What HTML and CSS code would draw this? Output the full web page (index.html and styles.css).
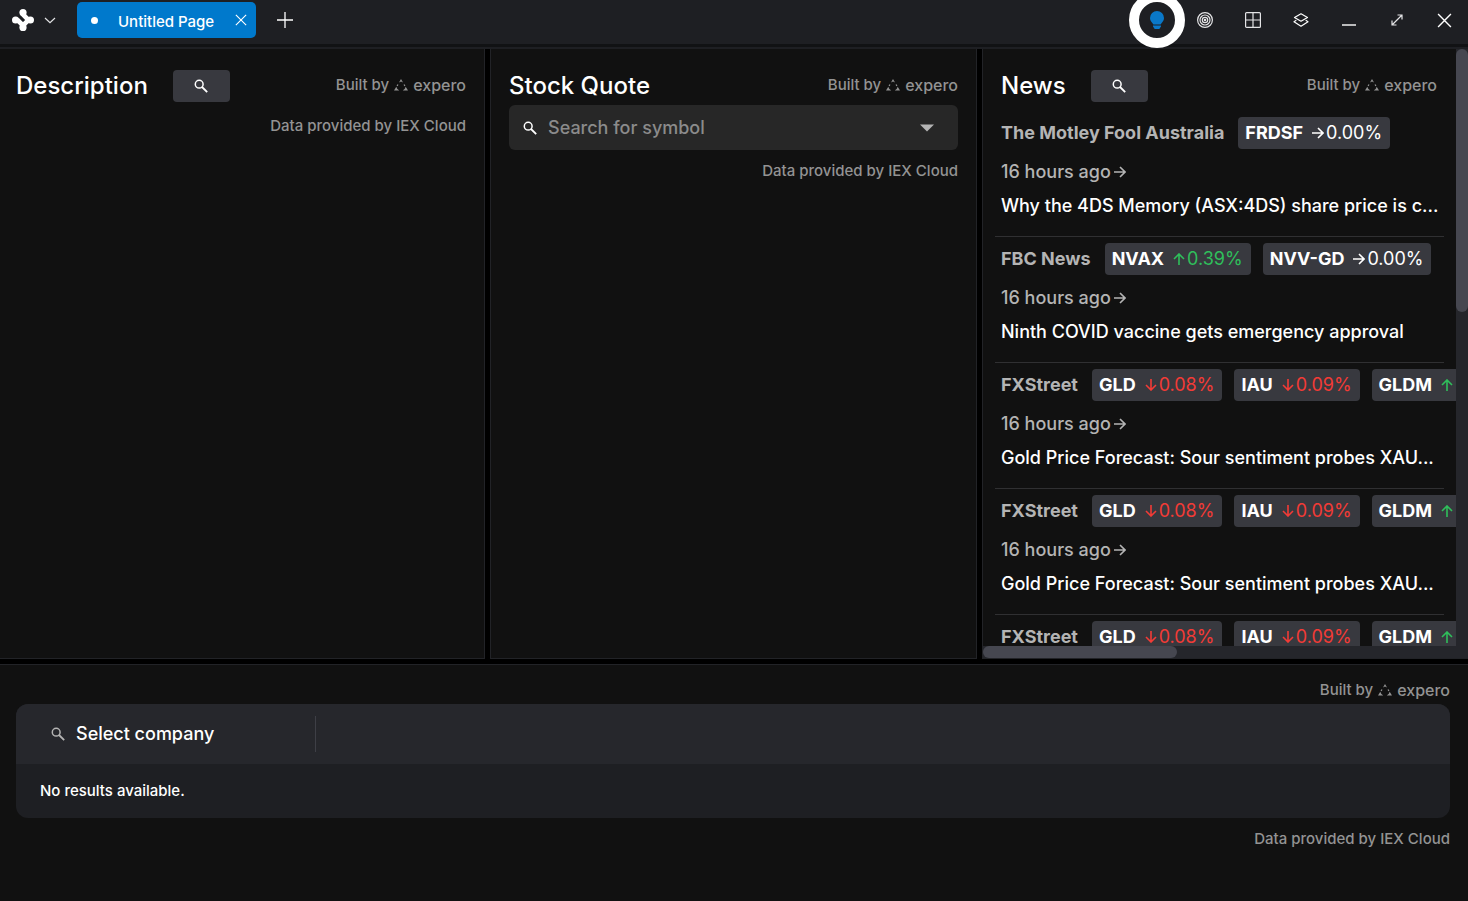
FILE: index.html
```
<!DOCTYPE html>
<html lang="en">
<head>
<meta charset="utf-8">
<title>Untitled Page</title>
<link rel="stylesheet" href="styles.css">
</head>
<body>
<svg class="defs" aria-hidden="true">
  <symbol id="search" viewBox="0 0 14 14"><circle cx="5.200" cy="5.200" r="3.900" fill="none" stroke="currentColor" stroke-width="1.500"/><path d="M8 8l5.200 5.200" stroke="currentColor" stroke-width="1.800"/></symbol>
  <symbol id="arrow" viewBox="0 0 12 12"><path d="M0 6h11M6 1l5 5-5 5" fill="none" stroke="currentColor" stroke-width="1.600"/></symbol>
  <symbol id="close" viewBox="0 0 14 14"><path d="M1 1l12 12M13 1L1 13" stroke="currentColor" stroke-width="1.300" fill="none"/></symbol>
  <symbol id="expero" viewBox="0 0 14 12"><path d="M7 0l2 3.600-2-1-2 1zM2.300 7.800l.9 2 2 1.800H0zM11.700 7.800l-.9 2-2 1.800H14zM3.400 5.200l1.100.6-.9 1.500-1-.6zM10.600 5.200l-1.100.6.9 1.500 1-.6z" fill="currentColor"/></symbol>
</svg>
<div class="window">
  <header class="topbar">
    <button class="menu" aria-label="Main menu">
      <svg width="22" height="22" viewBox="0 0 22 22"><path fill="none" stroke="#fff" stroke-width="4.600" d="M10.500 4.500L11.500 6 16.500 11 11 16.500 5.500 11"/><path fill="none" stroke="#fff" stroke-width="3" d="M4 11h3M11 3v3"/><g fill="#fff"><circle cx="11" cy="3.600" r="3.600"/><circle cx="18.400" cy="11" r="3.600"/><circle cx="11" cy="18.400" r="3.600"/><circle cx="3.600" cy="11" r="3.600"/></g></svg>
      <svg width="12" height="7" viewBox="0 0 12 7"><path d="M1 1l5 4.600L11 1" fill="none" stroke="#e4e4e6" stroke-width="1.200"/></svg>
    </button>
    <div class="tab">
      <span class="dot"></span><span class="tab-name">Untitled Page</span>
      <button class="tab-close" aria-label="Close tab"><svg width="12" height="12"><use href="#close"/></svg></button>
    </div>
    <button class="add" aria-label="New page"><svg width="16" height="16" viewBox="0 0 16 16"><path d="M8 0v16M0 8h16" stroke="#fff" stroke-width="1.300"/></svg></button>
    <div class="tools">
      <button class="tool tip" aria-label="Theme"><svg width="14" height="18" viewBox="0 0 14 18"><path fill="#0a78c8" d="M7 0a7 7 0 0 1 7 7c0 2.600-1.400 3.700-2.700 5.400L10.600 13.600H3.400L2.700 12.400C1.400 10.700 0 9.600 0 7a7 7 0 0 1 7-7zM3 14.500h8v1L9.300 18H4.700L3 15.500z"/></svg></button>
      <button class="tool" aria-label="Focus"><svg width="16" height="16" viewBox="0 0 16 16" fill="none" stroke="#e4e4e6" stroke-width="1.200"><circle cx="8" cy="8" r="7.400"/><circle cx="8" cy="8" r="5"/><circle cx="8" cy="8" r="2.700"/><circle cx="8" cy="8" r=".7"/></svg></button>
      <button class="tool" aria-label="Layout"><svg width="16" height="16" viewBox="0 0 16 16" fill="none" stroke="#e4e4e6" stroke-width="1.200"><rect x=".6" y=".6" width="14.800" height="14.800" rx="1"/><path d="M8 1v14M1 8h14"/></svg></button>
      <button class="tool" aria-label="Layers"><svg width="16" height="14" viewBox="0 0 16 14" fill="none" stroke="#fff" stroke-width="1.200" stroke-linejoin="round"><path d="M8 .8l6.500 3.700L8 8.200 1.500 4.500zM3.300 7.200L1 8.800l7 4.400 7-4.400-2.300-1.600"/></svg></button>
      <button class="tool" aria-label="Minimize"><svg width="14" height="12" viewBox="0 0 14 12"><path d="M0 11h14" stroke="#fff" stroke-width="1.400"/></svg></button>
      <button class="tool" aria-label="Expand"><svg width="12" height="12" viewBox="0 0 12 12"><path d="M1.500 10.500l9-9M6.500 1H11v4.500M1 6.500V11h4.500" fill="none" stroke="#e4e4e6" stroke-width="1.200"/></svg></button>
      <button class="tool" aria-label="Close"><svg width="15" height="15"><use href="#close"/></svg></button>
    </div>
  </header>

  <main class="panes">
    <section class="pane">
      <div class="head"><h2>Description</h2><button class="find" aria-label="Search description"><svg width="14" height="14"><use href="#search"/></svg></button><div class="built">Built by <svg width="14" height="12"><use href="#expero"/></svg><span class="brand">expero</span></div></div>
      <p class="credit">Data provided by IEX Cloud</p>
    </section>
    <section class="pane">
      <div class="head"><h2>Stock Quote</h2><div class="built">Built by <svg width="14" height="12"><use href="#expero"/></svg><span class="brand">expero</span></div></div>
      <label class="combo"><svg width="14" height="14"><use href="#search"/></svg><input type="text" placeholder="Search for symbol" aria-label="Search for symbol"><svg width="16" height="8" viewBox="0 0 16 8"><path d="M1 .5h14L8 7.500z" fill="#b4b4b4"/></svg></label>
      <p class="credit">Data provided by IEX Cloud</p>
    </section>
    <section class="scroller">
      <div class="news">
        <div class="head"><h2>News</h2><button class="find" aria-label="Search news"><svg width="14" height="14"><use href="#search"/></svg></button><div class="built">Built by <svg width="14" height="12"><use href="#expero"/></svg><span class="brand">expero</span></div></div>
        <article class="item"><div class="row"><b class="source">The Motley Fool Australia</b><button class="chip"><b>FRDSF</b><span class="flat"><svg class="arr"><use href="#arrow"/></svg>0.00%</span></button></div><div class="ago">16 hours ago<svg class="arr"><use href="#arrow"/></svg></div><p class="title">Why the 4DS Memory (ASX:4DS) share price is c...</p></article>
        <article class="item"><div class="row"><b class="source">FBC News</b><button class="chip"><b>NVAX</b><span class="up"><svg class="arr"><use href="#arrow"/></svg>0.39%</span></button><button class="chip"><b>NVV-GD</b><span class="flat"><svg class="arr"><use href="#arrow"/></svg>0.00%</span></button></div><div class="ago">16 hours ago<svg class="arr"><use href="#arrow"/></svg></div><p class="title">Ninth COVID vaccine gets emergency approval</p></article>
        <article class="item"><div class="row"><b class="source">FXStreet</b><button class="chip"><b>GLD</b><span class="down"><svg class="arr"><use href="#arrow"/></svg>0.08%</span></button><button class="chip"><b>IAU</b><span class="down"><svg class="arr"><use href="#arrow"/></svg>0.09%</span></button><button class="chip"><b>GLDM</b><span class="up"><svg class="arr"><use href="#arrow"/></svg></span></button></div><div class="ago">16 hours ago<svg class="arr"><use href="#arrow"/></svg></div><p class="title">Gold Price Forecast: Sour sentiment probes XAU...</p></article>
        <article class="item"><div class="row"><b class="source">FXStreet</b><button class="chip"><b>GLD</b><span class="down"><svg class="arr"><use href="#arrow"/></svg>0.08%</span></button><button class="chip"><b>IAU</b><span class="down"><svg class="arr"><use href="#arrow"/></svg>0.09%</span></button><button class="chip"><b>GLDM</b><span class="up"><svg class="arr"><use href="#arrow"/></svg></span></button></div><div class="ago">16 hours ago<svg class="arr"><use href="#arrow"/></svg></div><p class="title">Gold Price Forecast: Sour sentiment probes XAU...</p></article>
        <article class="item"><div class="row"><b class="source">FXStreet</b><button class="chip"><b>GLD</b><span class="down"><svg class="arr"><use href="#arrow"/></svg>0.08%</span></button><button class="chip"><b>IAU</b><span class="down"><svg class="arr"><use href="#arrow"/></svg>0.09%</span></button><button class="chip"><b>GLDM</b><span class="up"><svg class="arr"><use href="#arrow"/></svg></span></button></div></article>
      </div>
      <div class="track vertical"><div class="thumb"></div></div>
      <div class="track horizontal"><div class="thumb"></div></div>
    </section>
  </main>

  <section class="bottom">
    <div class="built">Built by <svg width="14" height="12"><use href="#expero"/></svg><span class="brand">expero</span></div>
    <div class="results">
      <div class="results-head"><label class="company"><svg width="14" height="14"><use href="#search"/></svg><input type="text" placeholder="Select company" aria-label="Select company"></label></div>
      <p class="empty">No results available.</p>
    </div>
    <p class="credit">Data provided by IEX Cloud</p>
  </section>
</div>
</body>
</html>
```
FILE: styles.css
```
* { box-sizing: border-box; }
body { margin: 0; background: #000; color: #fff; font: 450 18px/24px Inter, sans-serif; }
h2, p { margin: 0; }
button { border: 0; padding: 0; background: none; color: inherit; font: inherit; }
input { border: 0; padding: 0; background: none; color: inherit; font: inherit; min-width: 0; outline: 0; }
svg { display: block; flex: none; }
.defs { display: none; }

.window { height: 100vh; display: flex; flex-direction: column; }

.topbar { flex: none; height: 47px; padding-bottom: 4px; display: flex; align-items: center; background: #1e1f23; border-bottom: 3px solid #111214; }
.menu { display: flex; align-items: center; gap: 10px; padding-left: 12px; width: 77px; }
.tab { display: flex; align-items: center; align-self: flex-start; width: 179px; height: 36px; margin-top: 2px; padding: 0 9px 0 14px; background: #0079cc; border-radius: 5px; font-size: 15px; font-weight: 500; }
.dot { width: 7px; height: 7px; border-radius: 50%; background: #fff; }
.tab-name { margin: 3px auto 0 20px; }
.add { margin-left: 21px; }
.tools { margin-left: auto; display: flex; align-items: center; }
.tool { width: 48px; height: 40px; display: flex; align-items: center; justify-content: center; }
.tool:last-child { width: 47px; }
.tip { position: relative; }
.tip::before { content: ""; position: absolute; inset: -8px -4px; border: 10px solid #fff; border-radius: 50%; }

.panes { flex: 1; min-height: 0; display: grid; grid-template-columns: minmax(0, 485fr) minmax(0, 487fr) minmax(0, 486fr); gap: 5px; border-top: 2px solid #1e1f23; }
.pane { padding: 21px 18px 0; background: #111; border: 1px solid #222327; border-top: 0; }
.pane:first-child { padding-left: 16px; border-left: 0; }
.head { display: flex; align-items: center; height: 32px; margin-bottom: 3px; }
h2 { font-size: 24px; font-weight: 550; line-height: 32px; }
.find { display: flex; align-items: center; justify-content: center; width: 57px; height: 32px; margin-left: 25px; background: #38393f; border-radius: 4px; }
.built { margin-left: auto; display: flex; align-items: center; gap: 5px; color: #939393; font-size: 15px; line-height: 20px; }
.head .built { padding-bottom: 2px; }
.brand { font-size: 16px; }
.credit { padding-top: 10px; text-align: right; font-size: 15px; line-height: 21px; font-weight: 550; color: #939393; }
.combo { display: flex; align-items: center; gap: 11px; height: 45px; padding: 0 23px 0 14px; background: #272727; border-radius: 6px; }
.combo input { flex: 1; }
.combo input::placeholder { color: #8b8b8b; opacity: 1; }

.scroller { display: grid; grid-template: minmax(0, 1fr) 12px / minmax(0, 1fr) 12px; min-height: 0; background: #111; border: 1px solid #222327; border-width: 0 0 1px 1px; }
.news { overflow: hidden; padding: 21px 12px 0; }
.news .head { padding: 0 7px 0 6px; margin-bottom: 9px; }
.item { height: 126px; padding: 6px 6px 0; border-bottom: 1px solid #303032; }
.item:last-child { border: 0; }
.row { display: flex; gap: 12px; align-items: center; height: 32px; white-space: nowrap; }
.source { padding-right: 2px; color: #b4b4b4; }
.chip { flex: none; display: flex; align-items: center; gap: 9px; height: 32px; padding: 0 8px 0 7px; background: #38393f; border-radius: 4px; }
.chip span, .ago { display: flex; align-items: center; gap: 3px; }
.chip span { gap: 2px; font-weight: 400; }
.arr { width: 12px; height: 12px; }
.up { color: #2fbf5b; }
.up .arr { transform: rotate(-90deg); }
.down { color: #f33b36; }
.down .arr { transform: rotate(90deg); }
.ago { margin-top: 11px; color: #b4b4b4; }
.title { margin-top: 10px; white-space: nowrap; }
.track { background: #25262b; }
.vertical { width: 12px; }
.vertical .thumb { height: 44%; }
.horizontal { grid-column: 1 / -1; }
.horizontal .thumb { height: 12px; width: 40%; }
.thumb { background: #464750; border-radius: 6px; }

.bottom { flex: none; height: 237px; margin-top: 5px; padding: 15px 18px 0 16px; background: #111; border-top: 1px solid #222327; }
.bottom .built { justify-content: flex-end; margin-bottom: 4px; }
.results { background: #1e1f23; border-radius: 12px; overflow: hidden; }
.results-head { display: flex; align-items: center; height: 60px; background: #26272c; }
.company { display: flex; align-items: center; gap: 11px; width: 300px; height: 36px; padding-left: 35px; border-right: 1px solid #3e3f46; color: #b4b4b4; }
.company input::placeholder { color: #fff; opacity: 1; }
.empty { padding: 15px 24px; font-size: 15px; font-weight: 500; }
```
